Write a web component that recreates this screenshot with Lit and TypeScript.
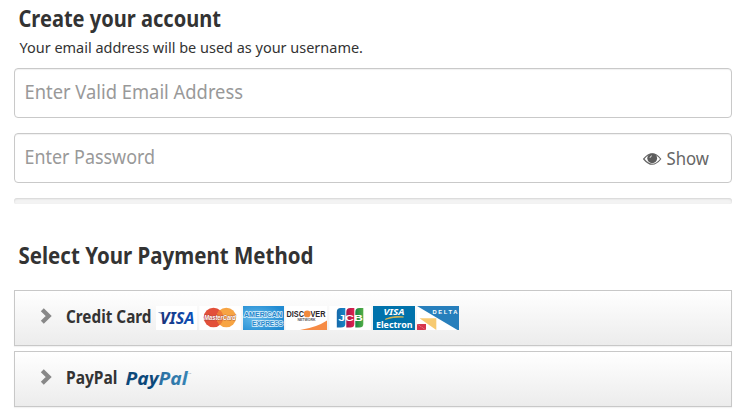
import { LitElement, html, svg, css } from "lit";
import { customElement } from "lit/decorators.js";

const t = (
  x: number, y: number, w: number, size: number, fill: string, s: string, cls = "b"
) => svg`<text class=${cls} x=${x} y=${y} textLength=${w} lengthAdjust="spacingAndGlyphs" font-size=${size} fill=${fill}>${s}</text>`;

@customElement("card-logos")
export class CardLogos extends LitElement {
  static styles = css`
    :host { display: block; height: 24px; }
    svg { display: block; }
    text { font-family: "Noto Sans", "Open Sans", sans-serif; }
    .b { font-weight: 700; }
    .i { font-weight: 700; font-style: italic; }
    .s { font-family: "Liberation Sans", sans-serif; font-weight: 700; }
    .mc {
      font-family: "Liberation Sans", sans-serif;
      font-weight: 700;
      font-style: italic;
      stroke: #8e3b3299;
      stroke-width: 1px;
      paint-order: stroke;
    }
    .amex {
      font-family: "Liberation Sans", sans-serif;
      font-weight: 700;
      stroke: #d8effb;
      stroke-width: 1.7px;
      paint-order: stroke;
    }
  `;
  render() {
    return html`<svg width="303" height="24" viewBox="0 0 303 24">
      <defs>
        <linearGradient id="visa"><stop offset="0" stop-color="#1a3278" /><stop offset="1" stop-color="#0b52bd" /></linearGradient>
        <radialGradient id="amex" cx="0.3" cy="0.5" r="0.7"><stop offset="0" stop-color="#62b9ea" /><stop offset="1" stop-color="#218bd2" /></radialGradient>
        <linearGradient id="jb"><stop offset="0" stop-color="#1769a9" /><stop offset="1" stop-color="#1585c7" /></linearGradient>
        <linearGradient id="jr"><stop offset="0" stop-color="#a5164a" /><stop offset="1" stop-color="#e0224f" /></linearGradient>
        <linearGradient id="jg"><stop offset="0" stop-color="#168445" /><stop offset="1" stop-color="#55af47" /></linearGradient>
      </defs>

      <rect width="41" height="24" fill="#fff" />
      ${t(4, 17.6, 34.5, 15.6, "url(#visa)", "VISA", "i")}
      <path d="M2.200 6.400H6.500L7.500 9Q5.500 7.300 2.200 6.800z" fill="#26448c" />

      <g transform="translate(43.300)">
        <rect width="41.500" height="24" fill="#fff" />
        <circle cx="14.200" cy="11.500" r="9.800" fill="#e2503a" />
        <circle cx="27" cy="11.500" r="9.800" fill="#f7a443" />
        <path d="M20.600 4.100a9.800 9.800 0 0 1 0 14.800a9.800 9.800 0 0 1 0-14.800" fill="#ee7b38" />
        ${t(5, 14.4, 31.5, 7.4, "#fff", "MasterCard", "mc")}
      </g>

      <g transform="translate(87)">
        <rect width="41" height="24" fill="url(#amex)" />
        ${t(1, 10.6, 38, 8, "#2787cb", "AMERICAN", "amex")}
        ${t(9, 19.6, 31, 8, "#2787cb", "EXPRESS", "amex")}
      </g>

      <g transform="translate(129.500)">
        <rect width="41.500" height="24" fill="#fff" />
        ${t(1, 11, 17.5, 9, "#2b2527", "DISC", "s")}
        <circle cx="21.700" cy="7.900" r="3.400" fill="#f18a3c" />
        ${t(25, 11, 15, 9, "#2b2527", "VER", "s")}
        ${t(12, 15.3, 18, 3.2, "#555", "NETWORK", "s")}
        <path d="M14.500 24Q31 21.500 41.500 14.500V24z" fill="#f68b45" />
      </g>

      <g transform="translate(173.300)">
        <rect width="41.700" height="24" fill="#fff" />
        <path d="M11.500 2H16v16q0 3.500-4.500 3.500H7.500V6q0-4 4-4" fill="url(#jb)" />
        <path d="M21 2h4v16q0 3.500-4 3.500h-4V6q0-4 4-4" fill="url(#jr)" />
        <path d="M30 2h4v16q0 3.500-4 3.500h-4V6q0-4 4-4" fill="url(#jg)" />
        ${t(9, 15, 24.5, 8.4, "#fff", "JCB", "s")}
      </g>

      <g transform="translate(217)">
        <rect width="42" height="24" fill="#0072ab" />
        ${t(10.5, 8.7, 21, 9.6, "#fff", "VISA", "i")}
        <path d="M12.300 13.300Q20 9.300 30.500 11Q20 10.700 12.300 13.300" fill="#f4bd48" stroke="#f4bd48" stroke-width=".7" />
        ${t(3, 22.2, 36.5, 9.2, "#fff", "Electron", "b")}
      </g>

      <g transform="translate(261)">
        <rect width="42" height="24" fill="#fff" />
        <path d="M0 0H42V24H40.500z" fill="#277fbc" />
        <text class="s" x="15.500" y="8.200" textLength="25" font-size="5.800" fill="#fff">DELTA</text>
        <path d="M2.500 12.300H19.300V24z" fill="#f7ca70" />
        <path d="M0 18H9V24z" fill="#d6364c" />
        <path d="M0 18V24H9z" fill="#d6364c" />
      </g>
    </svg>`;
  }
}

@customElement("app-root")
export class AppRoot extends LitElement {
  static styles = css`
    :host {
      display: block;
      height: 416px;
      box-sizing: border-box;
      padding: 0 9px 0 14px;
      background: #fff;
      font-family: "Noto Sans", "Open Sans", sans-serif;
      color: #333;
      overflow: hidden;
    }
    svg { display: block; flex: none; overflow: visible; }
    text { font-family: "Noto Sans", "Open Sans", sans-serif; }
    .b { font-weight: 700; }
    .r { font-weight: 400; }
    .i { font-weight: 700; font-style: italic; }
    .field {
      display: flex;
      align-items: center;
      box-sizing: border-box;
      height: 50px;
      border: 1px solid #c9c9c9;
      border-radius: 4px;
      box-shadow: inset 0 1px 1px rgba(0, 0, 0, 0.06);
    }
    .field + .field { margin-top: 15px; }
    .show { margin-left: auto; }
    .meter {
      height: 6px;
      margin: 15px 0 32px;
      border-radius: 3px 3px 2px 2px;
      background: #f3f3f3;
      box-shadow: inset 0 1px 2px rgba(0, 0, 0, 0.13);
    }
    .option {
      display: flex;
      box-sizing: border-box;
      height: 56px;
      border: 1px solid #c8c8c8;
      background: linear-gradient(#fff, #ececec);
      box-shadow: 0 1px 1px rgba(0, 0, 0, 0.05);
    }
    .option + .option { margin-top: 5px; }
    card-logos { margin-top: 15px; }
  `;
  render() {
    const chevron = svg`<path d="M27.300 18.700L33.700 25L27.300 31.300" fill="none" stroke="#888" stroke-width="4.200"/>`;
    return html`
      <svg width="400" height="68">
        ${t(4.5, 27, 202.5, 23, "#333", "Create your account")}
        ${t(5.5, 53, 343.5, 14.4, "#333", "Your email address will be used as your username.", "r")}
      </svg>
      <div class="field">
        <svg width="300" height="48">${t(9.5, 30, 218.5, 19.4, "#999", "Enter Valid Email Address", "r")}</svg>
      </div>
      <div class="field">
        <svg width="300" height="48">${t(9.5, 30, 130.5, 19.4, "#999", "Enter Password", "r")}</svg>
        <svg class="show" width="88" height="48">
          <path d="M.7 25Q9.300 14.500 17.700 25Q9.300 35.500 .7 25z" fill="#fff" stroke="#666" stroke-width="1.200" />
          <circle cx="9.200" cy="24.300" r="4.900" fill="#5c5c5c" />
          <path d="M7 24Q7 22 9 21.800" fill="none" stroke="#ddd" stroke-width=".9" />
          ${t(23.5, 31, 42.5, 18.5, "#666", "Show", "r")}
        </svg>
      </div>
      <div class="meter"></div>
      <svg width="400" height="54">${t(4.5, 28, 295, 23, "#333", "Select Your Payment Method")}</svg>
      <div class="option">
        <svg width="141" height="54">${chevron}${t(51, 32, 85.5, 17.6, "#333", "Credit Card")}</svg>
        <card-logos></card-logos>
      </div>
      <div class="option">
        <svg width="200" height="54">
          <defs>
            <linearGradient id="pp" gradientUnits="userSpaceOnUse" x1="110" x2="173">
              <stop offset="0" stop-color="#0b487a" /><stop offset=".5" stop-color="#0b487a" />
              <stop offset=".54" stop-color="#2a70a2" /><stop offset="1" stop-color="#3584b5" />
            </linearGradient>
          </defs>
          ${chevron}${t(51, 32, 51.5, 17.6, "#333", "PayPal")}
          ${t(110.5, 33, 62, 18.5, "url(#pp)", "PayPal", "i")}
          ${t(173, 21.5, 3, 2.5, "#789", "TM", "r")}
        </svg>
      </div>
    `;
  }
}
